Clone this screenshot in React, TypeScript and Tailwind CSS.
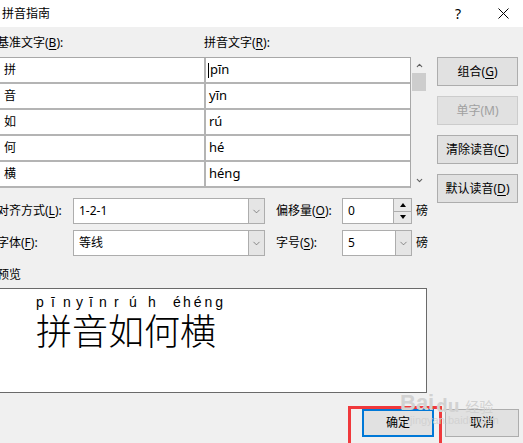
import React from 'react';
import { ChevronDown, ChevronUp } from 'lucide-react';

const rows = [
  ['拼', 'pīn'],
  ['音', 'yīn'],
  ['如', 'rú'],
  ['何', 'hé'],
  ['横', 'héng'],
];

// letter boxes in the preview line (widths picked to follow the reference spread)
const pinyinLetters: [string, string][] = [
  ['p', 'w-[15px]'],
  ['ī', 'w-[12px]'],
  ['n', 'w-[13px]'],
  ['y', 'w-[13px]'],
  ['ī', 'w-[10px]'],
  ['n', 'w-[15px]'],
  ['r', 'w-[15px]'],
  ['ú', 'w-[19px]'],
  ['h', 'w-[25px]'],
  ['é', 'w-[10px]'],
];

const Key: React.FC<{ k: string }> = ({ k }) => (
  <u className="underline-offset-[2px]">{k}</u>
);

const SideButton: React.FC<{ children: React.ReactNode; disabled?: boolean }> = ({ children, disabled }) => (
  <button
    className={`h-[29px] w-[81px] flex items-center justify-center text-[12px] bg-[#e1e1e1] border ${
      disabled ? 'border-[#cccccc] text-[#a0a0a0]' : 'border-[#adadad] text-black'
    }`}
  >
    {children}
  </button>
);

const Combo: React.FC<{ value: string; width: string }> = ({ value, width }) => (
  <div className={`flex h-[26px] ${width} border border-[#adadad] bg-white`}>
    <div className="flex-1 flex items-center pl-[5px] text-[12px]">{value}</div>
    <div className="w-[16px] flex items-center justify-center bg-[#e5e5e5] border-l border-[#adadad]">
      <ChevronDown size={11} strokeWidth={1.4} className="text-[#555]" />
    </div>
  </div>
);

const Spin: React.FC<{ value: string }> = ({ value }) => (
  <div className="flex h-[26px] w-[70px] border border-[#adadad] bg-white">
    <div className="flex-1 flex items-center pl-[5px] text-[12px]">{value}</div>
    <div className="w-[18px] flex flex-col">
      <div className="flex-1 flex items-center justify-center bg-[#e8e8e8] border-l border-b border-[#adadad]">
        <span className="w-0 h-0 border-l-[3px] border-r-[3px] border-b-[4px] border-l-transparent border-r-transparent border-b-black" />
      </div>
      <div className="flex-1 flex items-center justify-center bg-[#e8e8e8] border-l border-[#adadad]">
        <span className="w-0 h-0 border-l-[3px] border-r-[3px] border-t-[4px] border-l-transparent border-r-transparent border-t-black" />
      </div>
    </div>
  </div>
);

export default function App() {
  return (
    <div className="relative w-[523px] h-[443px] overflow-hidden bg-[#f0f0f0] text-black text-[12px] font-['Noto_Sans','Noto_Sans_CJK_SC',sans-serif]">
      {/* title bar */}
      <div className="h-[27px] bg-white flex items-center">
        <div className="pl-[2px] leading-[14px]">拼音指南</div>
        <div className="ml-auto flex items-center">
          <span className="w-[20px] text-center text-[14px] leading-[14px]">?</span>
          <span className="ml-[25px] mr-[10px] flex items-center justify-center w-[20px]">
            <svg width="11" height="11" viewBox="0 0 11 11">
              <path d="M0.5 0.5 L10.5 10.5 M10.5 0.5 L0.5 10.5" stroke="#000" strokeWidth="1" />
            </svg>
          </span>
        </div>
      </div>

      {/* readings table, option rows + side buttons */}
      <div className="flex items-start">
        <div className="w-[431px] shrink-0">
          <div className="h-[30px] flex items-center pt-[2px] leading-[14px]">
            <div className="w-[204px] -ml-[3px]">
              基准文字(<Key k="B" />):
            </div>
            <div className="ml-[3px]">
              拼音文字(<Key k="R" />):
            </div>
          </div>
          <div className="flex">
            <div className="w-[411px] border-t border-r border-[#a8a8a8] bg-white">
              {rows.map(([han, py], i) => (
                <div key={han} className="flex h-[26px] border-b-2 border-[#b4b4b4]">
                  <div className="w-[204px] flex items-center pl-[4px] text-[12px]">{han}</div>
                  <div className="w-[2px] bg-[#b4b4b4]" />
                  <div className="flex-1 flex items-center pl-[2px] text-[13px]">
                    {i === 0 && <span className="w-px h-[15px] bg-black mr-px" />}
                    <span className={i === 0 ? '' : 'pl-[1px]'}>{py}</span>
                  </div>
                </div>
              ))}
            </div>
            <div className="w-[16px] flex flex-col">
              <div className="h-[16px] flex items-center justify-center">
                <ChevronUp size={9} strokeWidth={3} className="text-[#606060]" />
              </div>
              <div className="h-[18px] mx-[1px] bg-[#cdcdcd]" />
              <div className="flex-1" />
              <div className="h-[16px] flex items-center justify-center">
                <ChevronDown size={9} strokeWidth={3} className="text-[#606060]" />
              </div>
            </div>
          </div>

          <div className="mt-[10px] flex flex-col gap-[6px]">
            <div className="flex items-center">
              <div className="w-[73px] -ml-[3px] leading-[14px]">
                对齐方式(<Key k="L" />):
              </div>
              <div className="ml-[3px]">
                <Combo value="1-2-1" width="w-[192px]" />
              </div>
              <div className="ml-[11px] w-[66px] leading-[14px]">
                偏移量(<Key k="O" />):
              </div>
              <Spin value="0" />
              <span className="ml-[4px] leading-[14px]">磅</span>
            </div>
            <div className="flex items-center">
              <div className="w-[73px] -ml-[3px] leading-[14px]">
                字体(<Key k="F" />):
              </div>
              <div className="ml-[3px]">
                <Combo value="等线" width="w-[192px]" />
              </div>
              <div className="ml-[11px] w-[66px] leading-[14px]">
                字号(<Key k="S" />):
              </div>
              <Combo value="5" width="w-[70px]" />
              <span className="ml-[4px] leading-[14px]">磅</span>
            </div>
          </div>
        </div>
        <div className="ml-[6px] mt-[30px] flex flex-col gap-[10px]">
          <SideButton>
            组合(<Key k="G" />)
          </SideButton>
          <SideButton disabled>单字(M)</SideButton>
          <SideButton>
            清除读音(<Key k="C" />)
          </SideButton>
          <SideButton>
            默认读音(<Key k="D" />)
          </SideButton>
        </div>
      </div>

      {/* preview */}
      <div className="mt-[12px] -ml-[3px] h-[14px] leading-[14px]">预览</div>
      <div className="mt-[6px] -ml-[1px] w-[428px] h-[105px] border border-[#6a6a6a] bg-white pl-[36px] pt-[5px]">
        <div className="flex h-[16px] text-[14px] leading-[16px] font-['Liberation_Sans',sans-serif]">
          {pinyinLetters.map(([ch, w], i) => (
            <span key={i} className={w}>
              {ch}
            </span>
          ))}
          <span className="tracking-[3px]">héng</span>
        </div>
        <div className="text-[36px] leading-[38px] font-light font-['Noto_Sans_CJK_SC',sans-serif]">拼音如何横</div>
      </div>

      {/* dialog buttons */}
      <div className="mt-[16px] flex justify-end pr-[4px] gap-[11px]">
        <button className="h-[28px] w-[72px] flex items-center justify-center bg-[#e1e1e1] border-2 border-[#0078d7] text-[12px]">
          确定
        </button>
        <button className="h-[28px] w-[74px] flex items-center justify-center bg-[#e1e1e1] border border-[#adadad] text-[12px]">
          取消
        </button>
      </div>

      {/* annotation + watermark overlays */}
      <div className="absolute left-[348px] top-[406px] w-[94px] h-[42px] border-[3px] border-[#f0393c]" />
      <div className="absolute left-[400px] top-[392px] flex flex-col items-start pointer-events-none text-[#d2d2d2]">
        <div className="flex items-end leading-none">
          <span className="text-[22px] font-bold font-['Liberation_Sans',sans-serif]">Bai</span>
          <span className="text-[18px] font-bold ml-[2px]">du</span>
          <span className="text-[14px] ml-[6px]">经验</span>
        </div>
        <span className="text-[11px] leading-[12px] ml-[10px] font-['Liberation_Sans',sans-serif]">jingyan.baidu.com</span>
      </div>
    </div>
  );
}
